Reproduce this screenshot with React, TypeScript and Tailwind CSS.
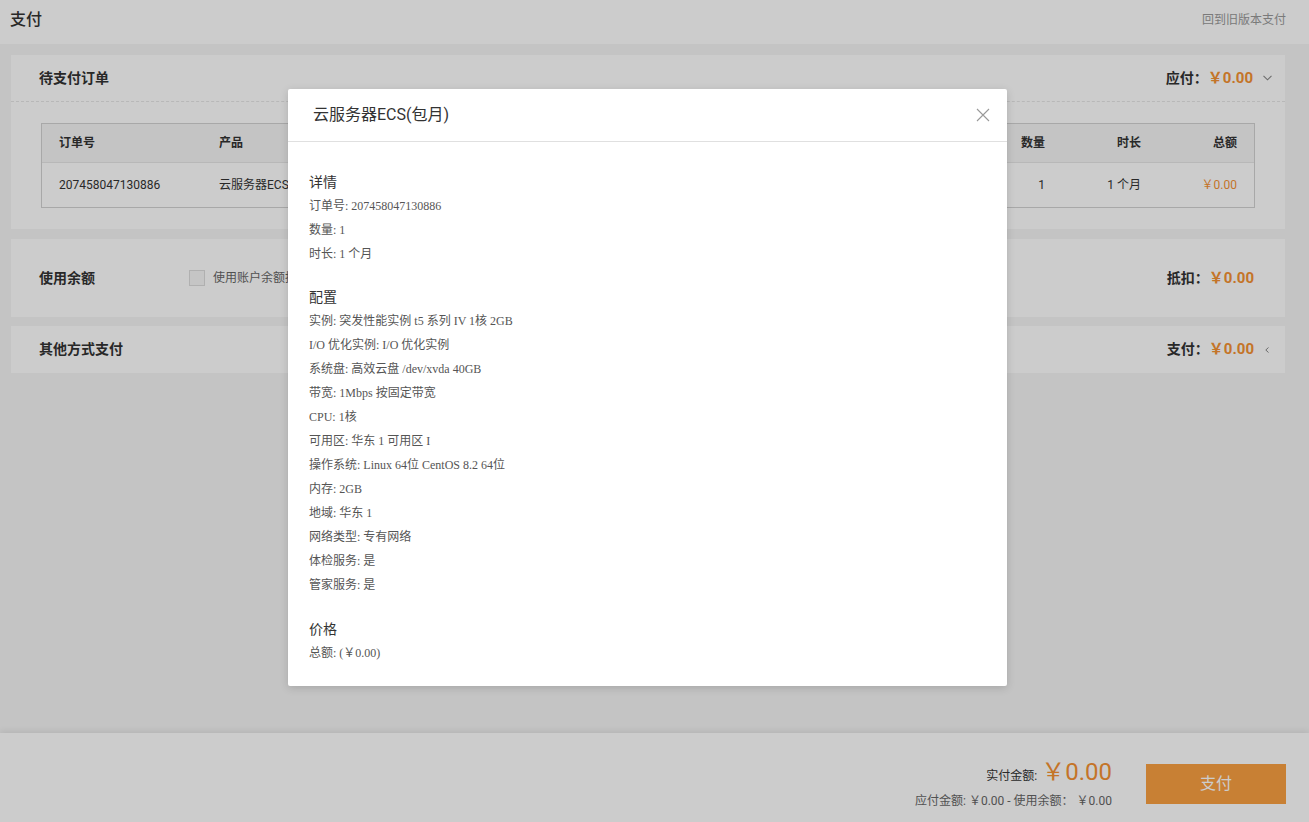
import React from "react";

const sans = "font-['Roboto','Noto_Sans_CJK_SC',sans-serif]";
const serif = "font-['Liberation_Serif','Noto_Sans_CJK_SC',serif]";

function ChevronDown() {
  return (
    <svg width="9" height="6" viewBox="0 0 9 6" className="block">
      <path d="M0.5 0.8 L4.5 4.8 L8.5 0.8" fill="none" stroke="#888" strokeWidth="1.1" />
    </svg>
  );
}

function ChevronLeft() {
  return (
    <svg width="4" height="6" viewBox="0 0 4 6" className="block">
      <path d="M3.5 0.5 L0.8 3 L3.5 5.5" fill="none" stroke="#888" strokeWidth="1" />
    </svg>
  );
}

const configItems = [
  "实例: 突发性能实例 t5 系列 IV 1核 2GB",
  "I/O 优化实例: I/O 优化实例",
  "系统盘: 高效云盘 /dev/xvda 40GB",
  "带宽: 1Mbps 按固定带宽",
  "CPU: 1核",
  "可用区: 华东 1 可用区 I",
  "操作系统: Linux 64位 CentOS 8.2 64位",
  "内存: 2GB",
  "地域: 华东 1",
  "网络类型: 专有网络",
  "体检服务: 是",
  "管家服务: 是",
];

function Section({ title, items, spacing }: { title: string; items: string[]; spacing: string }) {
  return (
    <div className={spacing}>
      <div className="text-[14px] leading-[22px] text-[#333]">{title}</div>
      {items.map((t) => (
        <div key={t} className="text-[12px] leading-[24px] text-[#555]">
          {t}
        </div>
      ))}
    </div>
  );
}

export default function App() {
  return (
    <div className={`${sans} h-screen flex flex-col bg-[#f5f5f5] overflow-hidden relative`}>
      {/* Header */}
      <div className="h-[44px] shrink-0 bg-white flex items-center justify-between pl-[10px] pr-[23px] pb-[4px]">
        <div className="text-[16px] font-medium text-[#333]">支付</div>
        <div className="text-[12px] text-[#999]">回到旧版本支付</div>
      </div>

      {/* Main */}
      <div className="flex-1 pl-[11px] pr-[24px] pt-[11px] flex flex-col">
        {/* Card 1 */}
        <div className="bg-white">
          <div className="h-[47px] flex items-center justify-between pl-[28px] pr-[13px] border-b border-dashed border-[#e6e6e6]">
            <div className="text-[14px] font-bold text-[#333]">待支付订单</div>
            <div className="flex items-center">
              <span className="text-[14px] font-bold text-[#333]">应付：</span>
              <span className="text-[15px] font-bold text-[#f59233]">￥0.00</span>
              <span className="ml-[10px]">
                <ChevronDown />
              </span>
            </div>
          </div>
          <div className="px-[30px] pt-[21px] pb-[21px]">
            <div className="border border-[#d3d3d3] text-[12px] text-[#333]">
              <div className="h-[39px] bg-[#f5f5f5] flex items-center font-bold border-b border-[#e6e6e6]">
                <div className="w-[160px] pl-[17px]">订单号</div>
                <div className="flex-1 pl-[17px]">产品</div>
                <div className="w-[96px] pr-[17px] text-right">数量</div>
                <div className="w-[96px] pr-[17px] text-right">时长</div>
                <div className="w-[96px] pr-[17px] text-right">总额</div>
              </div>
              <div className="h-[44px] flex items-center">
                <div className="w-[160px] pl-[17px]">207458047130886</div>
                <div className="flex-1 pl-[17px]">云服务器ECS(包月)</div>
                <div className="w-[96px] pr-[17px] text-right">1</div>
                <div className="w-[96px] pr-[17px] text-right">1 个月</div>
                <div className="w-[96px] pr-[17px] text-right text-[#f59233]">￥0.00</div>
              </div>
            </div>
          </div>
        </div>

        {/* Card 2 */}
        <div className="bg-white mt-[10px] h-[78px] flex items-center justify-between pl-[28px] pr-[31px]">
          <div className="flex items-center">
            <div className="w-[150px] text-[14px] font-bold text-[#333]">使用余额</div>
            <div className="w-[16px] h-[16px] border border-[#dcdcdc] bg-[#f7f7f7]" />
            <div className="ml-[8px] text-[12px] text-[#666]">使用账户余额抵扣（可用余额：￥0.00）</div>
          </div>
          <div className="flex items-center">
            <span className="text-[14px] font-bold text-[#333]">抵扣：</span>
            <span className="text-[15px] font-bold text-[#f59233]">￥0.00</span>
          </div>
        </div>

        {/* Card 3 */}
        <div className="bg-white mt-[9px] h-[47px] flex items-center justify-between pl-[28px] pr-[16px]">
          <div className="text-[14px] font-bold text-[#333]">其他方式支付</div>
          <div className="flex items-center">
            <span className="text-[14px] font-bold text-[#333]">支付：</span>
            <span className="text-[15px] font-bold text-[#f59233]">￥0.00</span>
            <span className="ml-[11px]">
              <ChevronLeft />
            </span>
          </div>
        </div>
      </div>

      {/* Footer */}
      <div className="h-[89px] shrink-0 bg-white shadow-[0_-2px_6px_rgba(0,0,0,0.08)] flex items-center justify-end pr-[23px] pt-[12px]">
        <div className="flex flex-col items-end mr-[34px]">
          <div className="flex items-baseline">
            <span className="text-[12px] text-[#333]">实付金额:</span>
            <span className="text-[24px] text-[#f59233] ml-[4px] leading-[30px]">￥0.00</span>
          </div>
          <div className="text-[12px] text-[#666] mt-[5px]">应付金额: ￥0.00 - 使用余额： ￥0.00</div>
        </div>
        <div className="w-[140px] h-[40px] bg-[#fba042] flex items-center justify-center text-[16px] text-white">
          支付
        </div>
      </div>

      {/* Overlay */}
      <div className="absolute inset-0 bg-black/20" />

      {/* Modal */}
      <div className="absolute left-[288px] top-[89px] w-[719px] bg-white rounded-[2px] shadow-[0_2px_8px_rgba(0,0,0,0.15)]">
        <div className="h-[53px] flex items-center justify-between pl-[25px] pr-[17px] border-b border-[#e0e0e0]">
          <div className="text-[16px] text-[#333]">云服务器ECS(包月)</div>
          <svg width="14" height="14" viewBox="0 0 14 14" className="block">
            <path d="M1 1 L13 13 M13 1 L1 13" stroke="#999" strokeWidth="1.1" />
          </svg>
        </div>
        <div className={`${serif} pt-[30px] pl-[21px] pr-[21px] pb-[21px]`}>
          <Section
            spacing=""
            title="详情"
            items={["订单号: 207458047130886", "数量: 1", "时长: 1 个月"]}
          />
          <Section spacing="mt-[21px]" title="配置" items={configItems} />
          <Section spacing="mt-[22px]" title="价格" items={["总额: (￥0.00)"]} />
        </div>
      </div>
    </div>
  );
}
